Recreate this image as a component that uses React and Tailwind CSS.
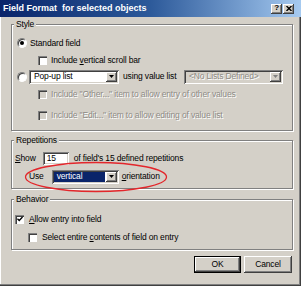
import React from 'react';

const Radio = ({ checked }) => (
  <span className="w-[10px] h-[10px] shrink-0 rounded-full bg-white border border-t-[#808080] border-l-[#808080] border-r-white border-b-white flex items-center justify-center shadow-[inset_1px_1px_0_#404040]">
    {checked && <span className="w-[4px] h-[4px] rounded-full bg-black" />}
  </span>
);

const Checkbox = ({ checked, disabled }) => (
  <span
    className={`w-[9px] h-[9px] shrink-0 flex items-center justify-center shadow-[inset_1px_1px_0_#808080,inset_2px_2px_0_#404040,inset_-1px_-1px_0_#fff] ${
      disabled ? 'bg-[#d4d0c8]' : 'bg-white'
    }`}
  >
    {checked && (
      <svg width="6" height="6" viewBox="0 0 7 7">
        <path d="M0.5 3.2 L2.6 5.3 L6.5 1.2" fill="none" stroke="#000" strokeWidth="1.6" />
      </svg>
    )}
  </span>
);

const Arrow = ({ disabled }) => (
  <span className="w-[11px] self-stretch m-[2px] ml-0 bg-[#d4d0c8] flex items-center justify-center shadow-[inset_-1px_-1px_0_#404040,inset_1px_1px_0_#fff,inset_-2px_-2px_0_#808080]">
    <svg width="5" height="3" viewBox="0 0 5 3">
      <path d="M0 0 H5 L2.5 3 Z" fill={disabled ? '#808080' : '#000'} />
    </svg>
  </span>
);

const Select = ({ value, width, disabled, selected }) => (
  <span
    className={`flex h-[14px] shrink-0 shadow-[inset_1px_1px_0_#808080,inset_-1px_-1px_0_#fff,inset_2px_2px_0_#404040,inset_-2px_-2px_0_#d4d0c8] ${width} ${
      disabled ? 'bg-[#d4d0c8]' : 'bg-white'
    }`}
  >
    <span className="flex-1 flex items-center p-[2px] pr-[1px] min-w-0">
      <span
        className={`flex-1 h-full flex items-center px-[3px] whitespace-nowrap ${
          selected ? 'bg-[#0a246a] text-white' : ''
        } ${disabled ? 'text-[#8e8b85] [text-shadow:1px_1px_0_#fff]' : ''}`}
      >
        {value}
      </span>
    </span>
    <Arrow disabled={disabled} />
  </span>
);

const Group = ({ title, className = '', children }) => (
  <fieldset
    className={`border border-[#808080] shadow-[inset_1px_1px_0_#fff,1px_1px_0_#fff] px-[5px] ${className}`}
  >
    <legend className="-ml-[3px] px-[2px] h-[10px] leading-[10px] bg-[#d4d0c8]">{title}</legend>
    {children}
  </fieldset>
);

const Dim = ({ children }) => (
  <span className="text-[#8e8b85] [text-shadow:1px_1px_0_#fff] whitespace-nowrap">{children}</span>
);

const CaptionButton = ({ children }) => (
  <span className="w-[11px] h-[10px] bg-[#d4d0c8] flex items-center justify-center shadow-[inset_-1px_-1px_0_#404040,inset_1px_1px_0_#fff,inset_-2px_-2px_0_#808080]">
    {children}
  </span>
);

export default function App() {
  return (
    <div className="relative w-[301px] h-[286px] overflow-hidden bg-[#d4d0c8] flex flex-col font-['Liberation_Sans',Arial,sans-serif] text-[8.5px] tracking-[-0.15px] leading-none text-black shadow-[inset_-1px_-1px_0_#404040,inset_-2px_-2px_0_#808080,inset_1px_0_0_#fff]">
      {/* title bar */}
      <div className="h-[17px] shrink-0 flex items-center pl-[3px] pr-[7px] bg-gradient-to-r from-[#0a246a] via-[#2d5a9a] to-[#a6caf0]">
        <span className="text-white font-bold text-[9px] tracking-normal whitespace-nowrap">Field Format&nbsp; for selected objects</span>
        <div className="ml-auto flex gap-[1px]">
          <CaptionButton>
            <span className="font-bold text-[8px] -mt-[1px]">?</span>
          </CaptionButton>
          <CaptionButton>
            <svg width="6" height="5" viewBox="0 0 6 5">
              <path d="M0.5 0 L5.5 5 M5.5 0 L0.5 5" stroke="#000" strokeWidth="1.4" />
            </svg>
          </CaptionButton>
        </div>
      </div>

      <div className="flex flex-col pl-[11px] pr-[8px] pt-[2px]">
        <Group title="Style" className="pb-[8px]">
          <div className="mt-[7px] h-[14px] flex items-center">
            <Radio checked />
            <span className="ml-[3px]">Standard field</span>
          </div>
          <div className="mt-[3px] h-[14px] flex items-center pl-[21px]">
            <Checkbox />
            <span className="ml-[4px]">
              Include <span className="underline">v</span>ertical scroll bar
            </span>
          </div>
          <div className="mt-[2px] h-[15px] flex items-center">
            <Radio />
            <span className="ml-[2px]">
              <Select value="Pop-up list" width="w-[90px]" />
            </span>
            <span className="ml-[4px] whitespace-nowrap">using value list</span>
            <span className="ml-auto mr-[4px]">
              <Select value="<No Lists Defined>" width="w-[99px]" disabled />
            </span>
          </div>
          <div className="mt-[3px] h-[14px] flex items-center pl-[21px]">
            <Checkbox disabled />
            <span className="ml-[4px]">
              <Dim>Include "Other..." item to allow entry of other values</Dim>
            </span>
          </div>
          <div className="mt-[7px] h-[14px] flex items-center pl-[21px]">
            <Checkbox disabled />
            <span className="ml-[4px]">
              <Dim>Include "Edit..." item to allow editing of value list</Dim>
            </span>
          </div>
        </Group>

        <Group title="Repetitions" className="mt-[4px] pb-[5px]">
          <div className="mt-[7px] h-[13px] flex items-center -ml-[2px]">
            <span>
              <span className="underline">S</span>how
            </span>
            <span className="ml-[7px] w-[26px] h-[13px] bg-white flex items-center pl-[4px] shadow-[inset_1px_1px_0_#808080,inset_-1px_-1px_0_#fff,inset_2px_2px_0_#404040,inset_-2px_-2px_0_#d4d0c8]">
              15
            </span>
            <span className="ml-[5px] whitespace-nowrap">of field's 15 defined repetitions</span>
          </div>
          <div className="mt-[5px] h-[13px] flex items-center pl-[12px]">
            <span>Use</span>
            <span className="ml-[8px]">
              <Select value="vertical" width="w-[67px]" selected />
            </span>
            <span className="ml-[3px]">
              <span className="underline">o</span>rientation
            </span>
          </div>
        </Group>

        <Group title="Behavior" className="mt-[5px] pb-[5px]">
          <div className="mt-[8px] h-[14px] flex items-center -ml-[2px]">
            <Checkbox checked />
            <span className="ml-[5px]">
              <span className="underline">A</span>llow entry into field
            </span>
          </div>
          <div className="mt-[4px] h-[14px] flex items-center pl-[11px]">
            <Checkbox />
            <span className="ml-[5px]">
              Select entire <span className="underline">c</span>ontents of field on entry
            </span>
          </div>
        </Group>

        <div className="mt-[6px] flex justify-end gap-[3px] pr-[1px]">
          <button className="w-[47px] h-[17px] bg-[#d4d0c8] border border-black shadow-[inset_-1px_-1px_0_#404040,inset_1px_1px_0_#fff,inset_-2px_-2px_0_#808080] text-[8.5px]">
            OK
          </button>
          <button className="w-[48px] h-[17px] bg-[#d4d0c8] shadow-[inset_-1px_-1px_0_#404040,inset_1px_1px_0_#fff,inset_-2px_-2px_0_#808080] text-[8.5px]">
            Cancel
          </button>
        </div>
      </div>

      {/* highlight around the orientation row */}
      <svg className="absolute left-[24px] top-[161px]" width="144" height="32" viewBox="0 0 144 32">
        <ellipse cx="72" cy="16" rx="70.5" ry="14.5" fill="none" stroke="#e3262b" strokeWidth="1.3" />
      </svg>
    </div>
  );
}
